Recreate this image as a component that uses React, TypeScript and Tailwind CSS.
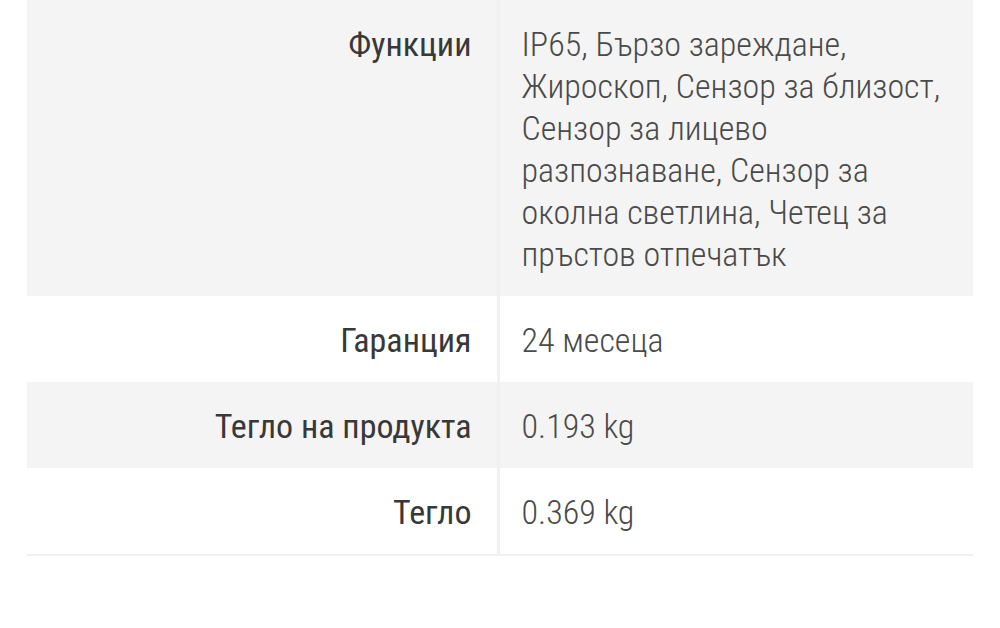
import React from 'react';

const specs = [
  {
    label: 'Функции',
    value:
      'IP65, Бързо зареждане, Жироскоп, Сензор за близост, Сензор за лицево разпознаване, Сензор за околна светлина, Четец за пръстов отпечатък',
  },
  { label: 'Гаранция', value: '24 месеца' },
  { label: 'Тегло на продукта', value: '0.193 kg' },
  { label: 'Тегло', value: '0.369 kg' },
];

const App = () => {
  return (
    <div
      className="min-h-[628px] w-[1000px] bg-white px-[27px]"
      style={{ fontFamily: '"Roboto Condensed", Roboto, sans-serif' }}
    >
      <table className="w-full border-collapse border-b-2 border-[#f0f0f0]">
        <tbody>
          {specs.map((row, index) => (
            <tr key={index} className={index % 2 === 0 ? 'bg-[#f4f4f4]' : 'bg-white'}>
              <th className="w-[471px] border-r-[3px] border-[#f0f0f0] pt-[23px] pb-[21px] pr-[25px] text-right align-top text-[34px] font-normal leading-[42px] text-[#383838]">
                {row.label}
              </th>
              <td className="pt-[23px] pb-[21px] pl-[22px] pr-[20px] align-top text-[34px] font-light leading-[42px] text-[#4a4a4a]">
                {row.value}
              </td>
            </tr>
          ))}
        </tbody>
      </table>
    </div>
  );
};

export default App;
